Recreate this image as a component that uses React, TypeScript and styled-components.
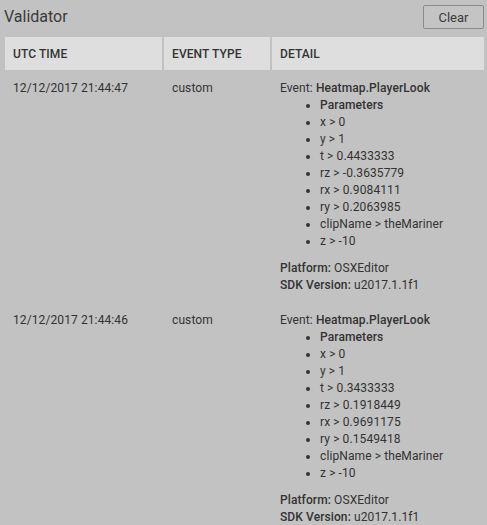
import React from "react";
import styled, { createGlobalStyle } from "styled-components";

const Global = createGlobalStyle`
  html, body { margin: 0; padding: 0; background: #c2c2c2; }
  body { font-family: Roboto, "Noto Sans", sans-serif; color: #333; font-size: 12px; letter-spacing: 0.1px; }
`;

const Page = styled.div`
  display: flex;
  flex-direction: column;
  padding: 5px 3px 0 5px;
`;

const TopBar = styled.div`
  display: flex;
  align-items: center;
  justify-content: space-between;
  height: 24px;
  margin-bottom: 8px;
`;

const Title = styled.h1`
  margin: 0 0 0 -1px;
  font-size: 16px;
  font-weight: 400;
  color: #3a3a3a;
  line-height: 24px;
  letter-spacing: 0;
`;

const ClearButton = styled.button`
  width: 61px;
  height: 24px;
  box-sizing: border-box;
  border: 1px solid #8a8a8a;
  border-radius: 2px;
  background: #c4c4c4;
  color: #3a3a3a;
  font-family: Roboto, sans-serif;
  font-size: 13px;
  padding: 0;
`;

const Grid = styled.div`
  display: grid;
  grid-template-columns: 157px 106px 212px;
  column-gap: 2px;
`;

const HeadCell = styled.div`
  background: #dedede;
  height: 33px;
  display: flex;
  align-items: center;
  padding-left: 8px;
  font-weight: 500;
  font-size: 12px;
  color: #333;
`;

const Cell = styled.div`
  padding: 10px 0 8px 8px;
  line-height: 17px;
  color: #333;
`;

const Strong = styled.span`
  font-weight: 500;
`;

const ParamList = styled.ul`
  margin: 0 0 10px 0;
  padding-left: 40px;
`;

const ParamItem = styled.li<{ $bold?: boolean }>`
  font-weight: ${(p) => (p.$bold ? 500 : 400)};
`;

type Ev = {
  time: string;
  type: string;
  name: string;
  params: [string, string][];
  platform: string;
  sdk: string;
};

const events: Ev[] = [
  {
    time: "12/12/2017 21:44:47",
    type: "custom",
    name: "Heatmap.PlayerLook",
    params: [
      ["x", "0"],
      ["y", "1"],
      ["t", "0.4433333"],
      ["rz", "-0.3635779"],
      ["rx", "0.9084111"],
      ["ry", "0.2063985"],
      ["clipName", "theMariner"],
      ["z", "-10"],
    ],
    platform: "OSXEditor",
    sdk: "u2017.1.1f1",
  },
  {
    time: "12/12/2017 21:44:46",
    type: "custom",
    name: "Heatmap.PlayerLook",
    params: [
      ["x", "0"],
      ["y", "1"],
      ["t", "0.3433333"],
      ["rz", "0.1918449"],
      ["rx", "0.9691175"],
      ["ry", "0.1549418"],
      ["clipName", "theMariner"],
      ["z", "-10"],
    ],
    platform: "OSXEditor",
    sdk: "u2017.1.1f1",
  },
];

export default function App() {
  return (
    <Page>
      <Global />
      <TopBar>
        <Title>Validator</Title>
        <ClearButton>Clear</ClearButton>
      </TopBar>
      <Grid>
        <HeadCell>UTC TIME</HeadCell>
        <HeadCell>EVENT TYPE</HeadCell>
        <HeadCell>DETAIL</HeadCell>
        {events.map((e, i) => (
          <React.Fragment key={i}>
            <Cell>{e.time}</Cell>
            <Cell>{e.type}</Cell>
            <Cell>
              <div>
                Event: <Strong>{e.name}</Strong>
              </div>
              <ParamList>
                <ParamItem $bold>Parameters</ParamItem>
                {e.params.map(([k, v]) => (
                  <ParamItem key={k}>
                    {k} &gt; {v}
                  </ParamItem>
                ))}
              </ParamList>
              <div>
                <Strong>Platform:</Strong> {e.platform}
              </div>
              <div>
                <Strong>SDK Version:</Strong> {e.sdk}
              </div>
            </Cell>
          </React.Fragment>
        ))}
      </Grid>
    </Page>
  );
}
